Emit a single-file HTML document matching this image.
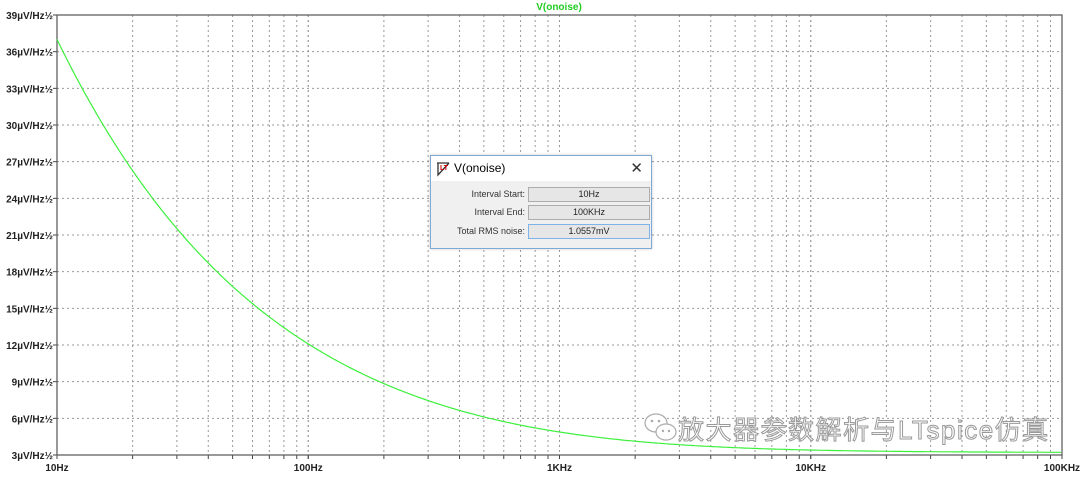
<!DOCTYPE html>
<html><head><meta charset="utf-8"><style>
body{margin:0;width:1080px;height:477px;background:#fff;overflow:hidden;position:relative;font-family:"Liberation Sans",Arial,sans-serif}
svg{position:absolute;left:0;top:0}
.dlg{position:absolute;left:430px;top:155px;width:220px;height:92px;border:1px solid #7fa9d6;background:#f0f0f0;box-shadow:0 0 3px rgba(0,0,0,.2)}
.tb{height:25px;background:#fff;position:relative;font-size:12px;line-height:25px}
.tb .t{position:absolute;left:23px;top:0;color:#000}
.tb .x{position:absolute;right:8px;top:0;font-size:15px;color:#333}
.row{position:absolute;left:0;width:220px;height:15px;font-size:9px}
.row .l{position:absolute;right:126px;top:2px;color:#333}
.row .v{position:absolute;left:97px;width:120px;height:13px;border:1px solid #adadad;background:#e6e6e6;text-align:center;line-height:13px;color:#222}
.wm{position:absolute;left:678px;top:410px;font-family:"Liberation Sans","Noto Sans CJK SC",sans-serif;font-size:26px;letter-spacing:1.5px;color:#fff;-webkit-text-stroke:1px #999;white-space:nowrap}
</style></head><body>
<svg id="s" width="1080" height="477"></svg>
<div class="dlg">
 <div class="tb"><svg width="16" height="16" style="left:4px;top:5px;position:absolute"><path d="M2 2h12M3 2v12l11-12" stroke="#333" fill="none" stroke-width="1.3"/><text x="5" y="9" font-size="7" fill="#c00" font-weight="bold">LT</text></svg><span class="t">V(onoise)</span><span class="x">✕</span></div>
 <div class="row" style="top:31px"><span class="l">Interval Start:</span><span class="v">10Hz</span></div>
 <div class="row" style="top:49px"><span class="l">Interval End:</span><span class="v">100KHz</span></div>
 <div class="row" style="top:68px"><span class="l">Total RMS noise:</span><span class="v" style="border-color:#7eb4ea">1.0557mV</span></div>
</div>
<svg width="40" height="36" style="left:642px;top:410px"><ellipse cx="14" cy="13" rx="11" ry="9" fill="#fff" stroke="#aaa" stroke-width="1.2"/><circle cx="10" cy="11" r="1.3" fill="#aaa"/><circle cx="17" cy="11" r="1.3" fill="#aaa"/><ellipse cx="24" cy="22" rx="10" ry="8" fill="#fff" stroke="#aaa" stroke-width="1.2"/><circle cx="21" cy="21" r="1.2" fill="#aaa"/><circle cx="27" cy="21" r="1.2" fill="#aaa"/></svg>
<div class="wm">放大器参数解析与LTspice仿真</div>
<script>
var s=document.getElementById('s'),h='';
var L=57,R=1062,T=15,B=455,D=(R-L)/4,S=(B-T)/12;
for(var i=0;i<=12;i++){var y=T+i*S;h+='<line x1="'+L+'" x2="'+R+'" y1="'+y+'" y2="'+y+'" stroke="#999" stroke-dasharray="2,3" stroke-width="1"/>';
h+='<line x1="'+(L-4)+'" x2="'+L+'" y1="'+y+'" y2="'+y+'" stroke="#444"/>';
h+='<text x="53" y="'+(y+4)+'" text-anchor="end" font-size="10" font-weight="bold" fill="#222" font-family="Liberation Sans">'+(39-3*i)+'µV/Hz½</text>';}
for(var d=0;d<4;d++)for(var k=1;k<=10;k++){var x=L+d*D+Math.log10(k)*D;h+='<line x1="'+x+'" x2="'+x+'" y1="'+T+'" y2="'+B+'" stroke="#999" stroke-dasharray="2,3"/>';h+='<line x1="'+x+'" x2="'+x+'" y1="'+B+'" y2="'+(B+4)+'" stroke="#444"/>';}
var lab=['10Hz','100Hz','1KHz','10KHz','100KHz'];
for(var d=0;d<5;d++)h+='<text x="'+(L+d*D)+'" y="471" text-anchor="middle" font-size="10" font-weight="bold" fill="#222" font-family="Liberation Sans">'+lab[d]+'</text>';
h+='<rect x="'+L+'" y="'+T+'" width="'+(R-L)+'" height="'+(B-T)+'" fill="none" stroke="#555" stroke-width="1.2"/>';
var p=[];for(var x=L;x<=R;x+=2){var f=10*Math.pow(10,(x-L)/D);var v=Math.sqrt(10.24+13588/f);p.push(x+','+(B-(v-3)/3*S).toFixed(1));}
h+='<polyline points="'+p.join(' ')+'" fill="none" stroke="#3cf03c" stroke-width="1.2"/>';
h+='<text x="559" y="10" text-anchor="middle" font-size="10" font-weight="bold" fill="#2c2" font-family="Liberation Sans">V(onoise)</text>';
s.innerHTML=h;
</script>
</body></html>
